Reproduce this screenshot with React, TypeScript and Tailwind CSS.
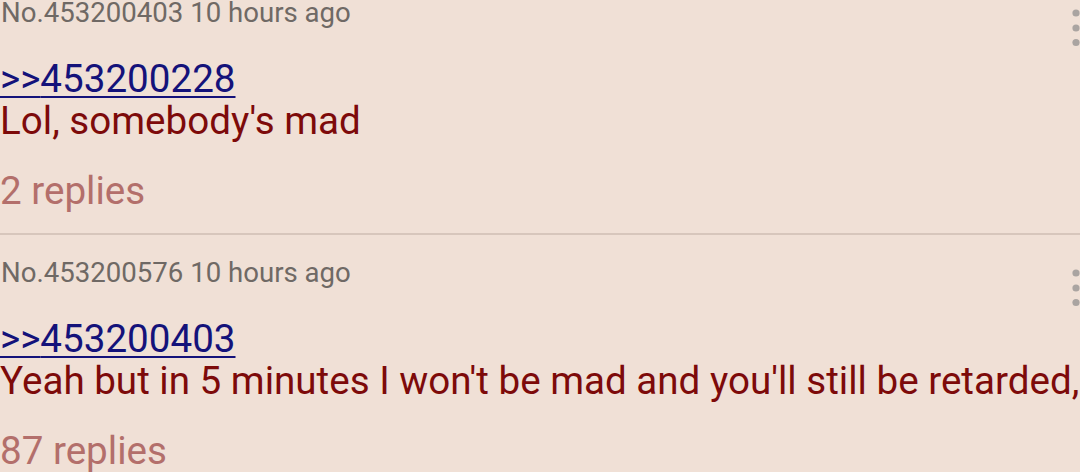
import React from "react";

interface Post {
  no: string;
  time: string;
  quote: string;
  body: string;
  replies: number;
}

const posts: Post[] = [
  {
    no: "453200403",
    time: "10 hours ago",
    quote: "453200228",
    body: "Lol, somebody's mad",
    replies: 2,
  },
  {
    no: "453200576",
    time: "10 hours ago",
    quote: "453200403",
    body: "Yeah but in 5 minutes I won't be mad and you'll still be retarded,",
    replies: 87,
  },
];

function MoreDots() {
  return (
    <svg width="8" height="38" viewBox="0 0 8 38" className="shrink-0">
      <circle cx="4" cy="4" r="3.6" fill="#aaa4a1" />
      <circle cx="4" cy="19" r="3.6" fill="#aaa4a1" />
      <circle cx="4" cy="33.5" r="3.6" fill="#aaa4a1" />
    </svg>
  );
}

function PostItem({ post }: { post: Post }) {
  return (
    <div className="border-b-2 border-[#d7c6bc] pt-[22px] pb-[20px]">
      <div className="flex items-start justify-between">
        <div className="text-[27.6px] leading-[32px] text-[#6f6965] pl-px">
          No.{post.no} {post.time}
        </div>
        <div className="mt-[12px]">
          <MoreDots />
        </div>
      </div>
      <div className="mt-[9px] text-[38.6px] leading-[45px]">
        <a className="text-[#14127a] underline decoration-2 underline-offset-[4px]">
          &gt;&gt;{post.quote}
        </a>
      </div>
      <div className="-mt-[3px] text-[38.6px] leading-[45px] text-[#7d0a0a] whitespace-nowrap overflow-hidden">
        {post.body}
      </div>
      <div className="mt-[25px] text-[38.6px] leading-[45px] text-[#b36f6b]">
        {post.replies} replies
      </div>
    </div>
  );
}

export default function App() {
  return (
    <div
      className="w-[1080px] h-[472px] overflow-hidden bg-[#f0e0d6]"
      style={{ fontFamily: "Roboto, 'Noto Sans', sans-serif" }}
    >
      <div className="-mt-[25px]">
        {posts.map((p) => (
          <PostItem key={p.no} post={p} />
        ))}
      </div>
    </div>
  );
}
